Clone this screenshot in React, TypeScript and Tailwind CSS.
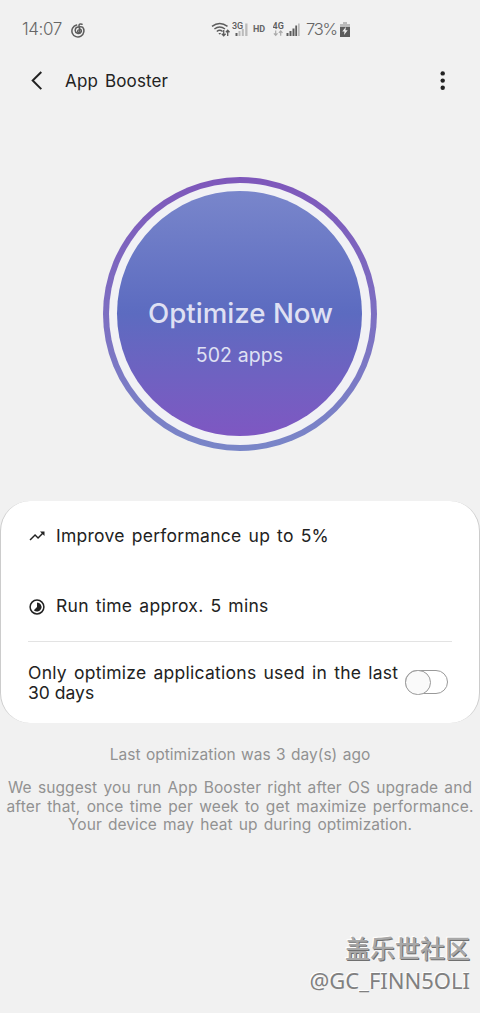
import React, { useState } from "react";

function StatusBar() {
  return (
    <div className="flex h-[58px] items-center pl-[22px] text-[#666]">
      <span className="mt-[2px] w-[49px] text-[17px] font-light tracking-[-0.4px] whitespace-nowrap">14:07</span>
      <svg className="mt-[2px] h-[15px] w-[15px]" viewBox="0 0 15 15" fill="none" stroke="#5c5c5c" strokeWidth="1.5" strokeLinecap="round">
        <path d="M5.6 2.1A6 6 0 1 0 11.5 4.1Q10 3.3 7.6 4.1A3.2 3.2 0 1 0 10.3 8.7Q10.7 7 9.3 6.2" />
        <path d="M11 1.2Q7.9.3 8 2.7L8.9 8.4Q8.5 10 7.2 9.5Q6.1 8.7 7.2 7.1" />
      </svg>
      <svg className="mt-[2px] ml-[125px] h-[18px] w-[20px] shrink-0" viewBox="0 0 20 18" fill="none" stroke="#5c5c5c" strokeWidth="1.5">
        <path d="M1 5.3Q8.7-.5 16.5 5.3M3.4 8Q8.7 4 14 8M5.8 10.5Q8.7 8.2 11.6 10.5" />
        <path d="M7.3 12l1.5 1.8 1.4-1.8z" fill="#5c5c5c" stroke="none" />
        <path d="M12.7 9v5.5M10.8 12.7l1.9 2 1.9-2M16.7 15V9.5M14.9 11.3l1.8-2 1.8 2" strokeWidth="1.3" />
      </svg>
      <svg className="h-[20px] w-[18px] shrink-0" viewBox="0 0 18 20">
        <text x="1" y="10" fontSize="9" fontWeight="500" fill="#5c5c5c" fontFamily="Roboto, sans-serif">3G</text>
        <path d="M4.5 17v-3h2v3z" fill="#5c5c5c" />
        <path d="M7.5 17v-5h2v5zM10.8 17V10h2v7zM14.2 17V4.5h2.3V17z" fill="#bbb" />
      </svg>
      <span className="mt-[2px] ml-[4px] w-[20px] font-[Roboto,sans-serif] text-[9px] font-bold">HD</span>
      <svg className="h-[20px] w-[29px] shrink-0" viewBox="0 0 29 20">
        <text x="-0.5" y="10" fontSize="9" fontWeight="600" fill="#5c5c5c" fontFamily="Roboto, sans-serif">4G</text>
        <path d="M2.7 11.5v5M.9 14.3l1.8 2 1.8-2M7.7 16.8v-5M5.9 13.8l1.8-2 1.8 2" fill="none" stroke="#aaa" strokeWidth="1.2" />
        <path d="M13.5 17v-3h2v3zM16.5 17v-5h2v5zM19.5 17V9.5h2V17zM22.3 17V6.5h1.8V17z" fill="#5c5c5c" />
        <path d="M25 17V4.5h1.7V17z" fill="#bbb" />
      </svg>
      <span className="ml-[4px] w-[34px] text-[16.5px] font-light tracking-[-1.2px] whitespace-nowrap">73%</span>
      <svg className="h-[15px] w-[10px] shrink-0" viewBox="0 0 10 15">
        <path d="M3 0h4v2h3v3H0V2h3z" fill="#bbb" />
        <path d="M0 5h10v10H0z" fill="#5c5c5c" />
        <path d="M6 4.7L2.3 9.5h2.2L4 13l3.7-4.7H5.4z" fill="#f1f1f1" />
      </svg>
    </div>
  );
}

function Header() {
  return (
    <header className="flex h-[44px] items-center pr-[33px] pl-[29px] text-[#222]">
      <svg className="h-[20px] w-[16px]" viewBox="0 0 16 20" fill="none" stroke="#222" strokeWidth="2">
        <path d="M12.3 2L3.7 10.5l8.6 8.6" />
      </svg>
      <h1 className="mt-[3px] ml-[20px] text-[17px] tracking-[0.15px] [word-spacing:2px]">App Booster</h1>
      <svg className="ml-auto h-[20px] w-[8px]" viewBox="0 0 8 20" fill="#222">
        <circle cx="3.7" cy="3.4" r="2.2" />
        <circle cx="3.7" cy="10.6" r="2.2" />
        <circle cx="3.7" cy="17.8" r="2.2" />
      </svg>
    </header>
  );
}

function OptimizeButton() {
  return (
    <button className="mx-auto mt-[75px] flex h-[274px] w-[274px] rounded-full bg-linear-to-b from-[#7e57bb] to-[#7986c8] p-[6px]">
      <span className="flex h-full w-full rounded-full bg-[#f1f1f5] pt-[8px] pr-[9px] pb-[9px] pl-[8px]">
        <span className="flex h-full w-full flex-col items-center rounded-full bg-linear-to-b from-[#7986cb] via-[#5c6bc0] to-[#7e57c2] pt-[102px] text-[#dfe0f3]">
          <span className="ml-[2px] text-[27.7px] leading-[40px] font-medium whitespace-nowrap">Optimize Now</span>
          <span className="mt-[8px] text-[19.5px] leading-[28px] tracking-[0.1px] whitespace-nowrap">502 apps</span>
        </span>
      </span>
    </button>
  );
}

function Toggle() {
  const [on, setOn] = useState(false);
  return (
    <button
      role="switch"
      aria-checked={on}
      onClick={() => setOn(!on)}
      className={`mt-[7px] flex h-[24px] w-[43px] shrink-0 items-center rounded-full border border-[#999] ${on ? "justify-end bg-[#5c6bc0]" : "bg-white"}`}
    >
      <span className="-mx-px mt-px h-[25px] w-[26px] shrink-0 rounded-full border border-[#999] bg-[#fafafa]" />
    </button>
  );
}

function InfoCard() {
  return (
    <section className="mt-[50px] h-[222px] rounded-[30px] border-x border-[#ccc] bg-white px-[27px] text-[17.5px] tracking-[0.27px] text-[#222] [word-spacing:1.8px]">
      <div className="flex h-[71px] items-center">
        <svg className="-mt-[2px] h-[18px] w-[18px]" viewBox="0 0 24 24" fill="#222">
          <path d="M16 6l2.29 2.29-4.88 4.88-4-4L2 16.59 3.41 18l6-6 4 4 6.3-6.29L22 12V6z" />
        </svg>
        <span className="ml-[10px] whitespace-nowrap">Improve performance up to 5%</span>
      </div>
      <div className="flex h-[70px] items-center border-b border-[#e3e3e3]">
        <svg className="h-[18px] w-[18px]" viewBox="0 0 24 24" fill="none">
          <circle cx="12" cy="12" r="9.2" stroke="#222" strokeWidth="2" />
          <path d="M12 6v6l-4.24 4.24A6 6 0 1 0 12 6z" fill="#222" />
        </svg>
        <span className="ml-[10px] whitespace-nowrap">Run time approx. 5 mins</span>
      </div>
      <div className="flex pt-[21px]">
        <p className="w-[377px] shrink-0 leading-[20px] whitespace-nowrap">
          Only optimize applications used in the last
          <br />
          <span className="tracking-normal [word-spacing:0px]">30 days</span>
        </p>
        <Toggle />
      </div>
    </section>
  );
}

function Footer() {
  return (
    <footer className="flex flex-col items-center text-center text-[15.5px] text-[#929292]">
      <p className="mt-[22px] leading-[20px] tracking-[0.02px] whitespace-nowrap [word-spacing:1px]">Last optimization was 3 day(s) ago</p>
      <p className="mt-[14px] leading-[18.5px] tracking-[0.09px] whitespace-nowrap [word-spacing:1.8px]">
        <span className="block">We suggest you run App Booster right after OS upgrade and</span>
        <span className="block tracking-[0.14px]">after that, once time per week to get maximize performance.</span>
        <span className="block tracking-[0.05px]">Your device may heat up during optimization.</span>
      </p>
    </footer>
  );
}

function Signature() {
  return (
    <div className="mt-auto flex flex-col items-end pr-[10px] pb-[17px]">
      <span className="font-['Noto_Sans_CJK_SC',sans-serif] text-[25px] leading-[34px] font-medium text-[#a8a8a8] [text-shadow:1px_1px_0_#707070,-1px_-1px_1px_#fff]">盖乐世社区</span>
      <span className="font-['Noto_Sans',sans-serif] text-[22px] leading-[32px] text-[#808080] [text-shadow:-1px_-1px_0_#fff]">@GC_FINN5OLI</span>
    </div>
  );
}

export default function App() {
  return (
    <main className="flex h-[1013px] w-[480px] flex-col overflow-hidden bg-[#f1f1f1] font-[Inter,sans-serif]">
      <StatusBar />
      <Header />
      <OptimizeButton />
      <InfoCard />
      <Footer />
      <Signature />
    </main>
  );
}
